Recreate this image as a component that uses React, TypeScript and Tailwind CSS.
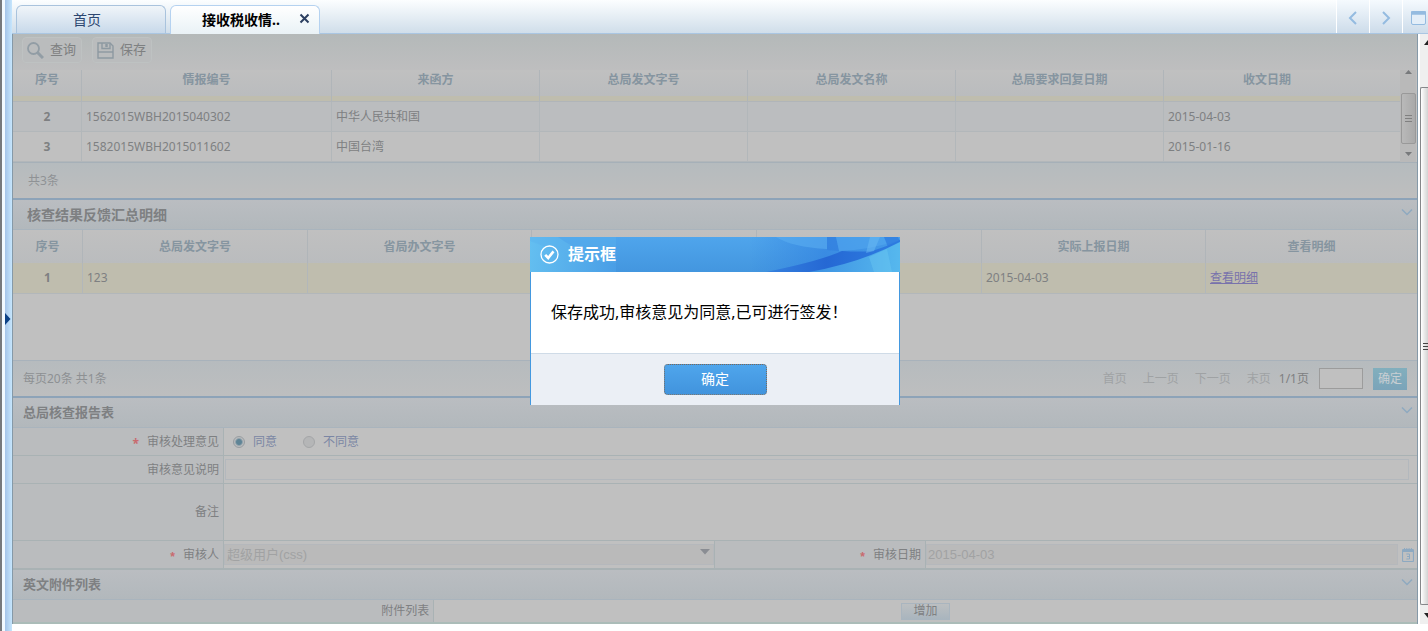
import type { ReactNode } from "react";

const TASK_COLUMNS = [
  { title: "序号", width: "w-[69px]" },
  { title: "情报编号", width: "w-[250px]" },
  { title: "来函方", width: "w-[208px]" },
  { title: "总局发文字号", width: "w-[208px]" },
  { title: "总局发文名称", width: "w-[208px]" },
  { title: "总局要求回复日期", width: "w-[208px]" },
  { title: "收文日期", width: "" },
];

const TASK_ROWS = [
  ["2", "1562015WBH2015040302", "中华人民共和国", "", "", "", "2015-04-03"],
  ["3", "1582015WBH2015011602", "中国台湾", "", "", "", "2015-01-16"],
];

const RESULT_COLUMNS = [
  { title: "序号", width: "w-[70px]" },
  { title: "总局发文字号", width: "w-[225px]" },
  { title: "省局办文字号", width: "w-[224px]" },
  { title: "", width: "w-[225px]" },
  { title: "", width: "w-[225px]" },
  { title: "实际上报日期", width: "w-[224px]" },
  { title: "查看明细", width: "" },
];

const PAGER_LINKS = ["首页", "上一页", "下一页", "末页"];

function Chevron() {
  return (
    <svg width="12" height="8" viewBox="0 0 12 8" fill="none" stroke="#8ea9c0" strokeWidth="1.5">
      <path d="M1 1.5 6 6.5 11 1.5" />
    </svg>
  );
}

function SectionHeader({ children, large = false }: { children: ReactNode; large?: boolean }) {
  return (
    <div className="flex h-[30px] items-center justify-between border-b border-[#a9b4bd] bg-linear-to-b from-[#babdc1] to-[#b2b8bc] pr-1 pl-[10px]">
      <h2 className={large ? "pl-1 text-sm font-bold" : "text-[13px] font-bold"}>{children}</h2>
      <button type="button" aria-label="收起" className="pb-1.5">
        <Chevron />
      </button>
    </div>
  );
}

function Label({ htmlFor, required, children }: { htmlFor?: string; required?: boolean; children: ReactNode }) {
  return (
    <label
      htmlFor={htmlFor}
      className="flex w-[211px] shrink-0 items-center justify-end gap-2 border-r border-[#a9b2b4] bg-[#babcbe] pr-1"
    >
      {required && <span className="pt-1 font-bold text-[#c96a6e]">*</span>}
      {children}
    </label>
  );
}

function TabBar() {
  return (
    <header className="flex h-[34px] items-end justify-between border-b border-[#aac6e2] bg-linear-to-b from-[#fcfeff] to-[#d0deea]">
      <nav className="flex gap-1 pl-1 text-sm">
        <a
          href="#home"
          className="flex h-7 w-[150px] items-center justify-center rounded-t-md border border-b-0 border-[#a9c3dd] bg-linear-to-b from-[#f0f5f9] to-[#c8d9ea] pr-2 text-[#2c4670]"
        >
          首页
        </a>
        <div className="-mb-px flex h-[29px] w-[150px] items-center justify-between rounded-t-md border border-b-0 border-[#b5d2f0] bg-linear-to-b from-white to-[#e9f2f6] pr-[9px] pl-[31px]">
          <a href="#task" className="font-bold text-black">
            接收税收情..
          </a>
          <button type="button" aria-label="关闭" className="pb-1">
            <svg width="11" height="11" viewBox="0 0 11 11" stroke="#2c3f60" strokeWidth="2">
              <path d="M1.5 1.5 9.5 9.5M9.5 1.5 1.5 9.5" />
            </svg>
          </button>
        </div>
      </nav>
      <div className="flex h-full">
        <button type="button" aria-label="向左" className="flex w-[33px] items-center justify-center border-l border-white bg-linear-to-b from-[#f5fafe] to-[#cddcea] pt-0.5">
          <svg width="10" height="14" viewBox="0 0 10 14" fill="none" stroke="#94bbe0" strokeWidth="2">
            <path d="M8 1 2 7 8 13" />
          </svg>
        </button>
        <button type="button" aria-label="向右" className="flex w-[33px] items-center justify-center border-l border-white bg-linear-to-b from-[#f5fafe] to-[#cddcea] pt-0.5">
          <svg width="10" height="14" viewBox="0 0 10 14" fill="none" stroke="#94bbe0" strokeWidth="2">
            <path d="M2 1 8 7 2 13" />
          </svg>
        </button>
        <button type="button" aria-label="最大化" className="flex w-[26px] items-center justify-end border-l border-white bg-linear-to-b from-[#f5fafe] to-[#cddcea] pt-0.5 pr-0.5">
          <svg width="15" height="14" viewBox="0 0 15 14" fill="none" stroke="#94bbe0">
            <rect x="0.5" y="0.5" width="14" height="13" rx="1.5" fill="#e3eef8" />
            <path d="M0 2H15" strokeWidth="3.5" />
          </svg>
        </button>
      </div>
    </header>
  );
}

function Toolbar() {
  return (
    <div className="flex h-9 items-center gap-[10px] bg-linear-to-b from-[#b4b9b9] to-[#bebebf] pb-1 pl-[9px] text-[13px] text-[#7e8081]">
      <button type="button" className="flex h-[26px] w-[60px] items-center gap-1.5 rounded border border-[#bec2c2] bg-[#babcbd] pl-1">
        <svg width="17" height="17" viewBox="0 0 17 17" fill="none" stroke="#929da5">
          <circle cx="6.5" cy="6.5" r="5.5" strokeWidth="1.8" />
          <path d="m10.5 10.5 5.5 5.5" strokeWidth="3" />
        </svg>
        查询
      </button>
      <button type="button" className="flex h-[26px] w-[60px] items-center gap-1.5 rounded border border-[#bec2c2] bg-[#babcbd] pl-1">
        <svg width="17" height="17" viewBox="0 0 17 17" fill="none" stroke="#8d99a1" strokeWidth="1.4">
          <path d="M1 1H13L16 4V16H1Z" />
          <path d="M5 1V6.5H13V1.5" />
          <path d="M9.5 2V5" strokeWidth="2.4" />
          <path d="M1 10H16" />
        </svg>
        保存
      </button>
    </div>
  );
}

function GridScrollbar() {
  return (
    <div className="mr-px flex w-4 flex-col items-center justify-between bg-[#b9b9b9] text-[#77797b]">
      <svg width="7" height="4" viewBox="0 0 7 4" fill="currentColor">
        <path d="M0 4 3.5 0 7 4Z" />
      </svg>
      <div className="mt-2.5 flex h-[51px] w-[15px] flex-col items-center justify-center gap-0.5 rounded-xs border border-[#999] bg-linear-to-r from-[#b9b9b9] to-[#a9a9a9]">
        <i className="h-px w-[7px] bg-[#808080]" />
        <i className="h-px w-[7px] bg-[#808080]" />
        <i className="h-px w-[7px] bg-[#808080]" />
      </div>
      <svg className="mb-1.5" width="7" height="4" viewBox="0 0 7 4" fill="currentColor">
        <path d="M0 0H7L3.5 4Z" />
      </svg>
    </div>
  );
}

function TaskGrid() {
  return (
    <section>
      <div className="flex border-b border-[#a6b0b8]">
        <table className="w-full flex-1 table-fixed border-separate border-spacing-0">
          <thead>
            <tr className="h-[26px] text-[#8695a0]">
              {TASK_COLUMNS.map((col) => (
                <th key={col.title} className={`${col.width} border-r border-[#b0b5b9] bg-linear-to-b from-[#c0c0c0] to-[#babcbe] p-0 pb-1.5 last:border-r-0 last:pr-[30px]`}>
                  {col.title}
                </th>
              ))}
            </tr>
          </thead>
          <tbody>
            {/* first row is scrolled almost out of view */}
            <tr className="h-1.5">
              {TASK_COLUMNS.map((col) => (
                <td key={col.title} className="border-r border-b border-[#b0b5b9] bg-[#bfbdae] p-0 last:border-r-0" />
              ))}
            </tr>
            {TASK_ROWS.map((row, i) => (
              <tr key={row[0]} className={i % 2 ? "h-[30px] bg-[#c0c0c0]" : "h-[30px] bg-[#bbbdbf]"}>
                {row.map((cell, j) => (
                  <td key={j} className="border-r border-b border-[#b2b7ba] px-1 py-0 first:text-center first:font-bold last:border-r-0">
                    {cell}
                  </td>
                ))}
              </tr>
            ))}
          </tbody>
        </table>
        <GridScrollbar />
      </div>
      <div className="flex h-[35px] items-center bg-linear-to-b from-[#b5bbbe] to-[#bebebe] pl-[15px] text-[#8f9295]">共3条</div>
    </section>
  );
}

function ResultGrid() {
  return (
    <section className="border-y-2 border-[#8da3b8]">
      <SectionHeader large>核查结果反馈汇总明细</SectionHeader>
      <div className="min-h-[130px]">
        <table className="w-full table-fixed border-separate border-spacing-0">
          <thead>
            <tr className="h-[33px] text-[#8695a0]">
              {RESULT_COLUMNS.map((col, i) => (
                <th key={i} className={`${col.width} border-r border-[#b0b5b9] bg-linear-to-b from-[#c0c0c0] to-[#babcbe] p-0 last:border-r-0`}>
                  {col.title}
                </th>
              ))}
            </tr>
          </thead>
          <tbody>
            <tr className="h-[31px] bg-[#bfbdae]">
              {["1", "123", "", "", "", "2015-04-03"].map((cell, i) => (
                <td key={i} className="border-r border-b border-[#b2b7ba] px-1 py-0 first:text-center first:font-bold">
                  {cell}
                </td>
              ))}
              <td className="border-b border-[#b2b7ba] px-1 py-0">
                <a href="#detail" className="text-[#7872ac] underline">
                  查看明细
                </a>
              </td>
            </tr>
          </tbody>
        </table>
      </div>
      <div className="flex h-9 items-center justify-between border-t border-[#a8b2bb] bg-linear-to-b from-[#b6bbbe] to-[#bdbebf] px-[10px]">
        <span className="text-[#8d9093]">每页20条 共1条</span>
        <div className="flex items-center">
          <nav className="flex gap-4 pr-2 text-[#9fa2a4]">
            {PAGER_LINKS.map((text) => (
              <a key={text} href="#page">
                {text}
              </a>
            ))}
          </nav>
          <span>1/1页</span>
          <input aria-label="页码" className="mx-[10px] h-[21px] w-11 border border-[#9c9c9c] bg-[#c0c0c0] px-1" />
          <button type="button" className="h-[22px] w-[34px] bg-linear-to-b from-[#82afbd] to-[#7ba4b9] text-[#c9cfd3]">
            确定
          </button>
        </div>
      </div>
    </section>
  );
}

function ReportForm() {
  return (
    <form className="border-b-2 border-[#a9b2b4]">
      <SectionHeader>总局核查报告表</SectionHeader>
      <div className="flex h-7 border-b border-[#a9b2b4]">
        <Label required>审核处理意见</Label>
        <div className="flex items-center gap-[26px] pl-[9px] text-[#7b86a4]">
          <label className="flex items-center gap-2">
            <input
              type="radio"
              name="opinion"
              defaultChecked
              className="size-3 appearance-none rounded-full border border-[#999ea2] bg-[#b5b8ba] checked:bg-radial checked:from-[#5f8496] checked:from-35% checked:to-[#b8babc] checked:to-60%"
            />
            同意
          </label>
          <label className="flex items-center gap-2">
            <input type="radio" name="opinion" className="size-3 appearance-none rounded-full border border-[#a4a6a8] bg-[#b5b6b7]" />
            不同意
          </label>
        </div>
      </div>
      <div className="flex h-7 border-b border-[#a9b2b4]">
        <Label htmlFor="explain">审核意见说明</Label>
        <div className="flex flex-1 items-center pr-2 pl-px">
          <input id="explain" className="h-[21px] w-full border border-[#b3b8bd] bg-[#c0c0c0] px-1" />
        </div>
      </div>
      <div className="flex h-[57px] border-b border-[#a9b2b4]">
        <Label htmlFor="remark">备注</Label>
        <textarea id="remark" className="flex-1 resize-none bg-[#c0c0c0] p-1" />
      </div>
      <div className="grid h-[27px] grid-cols-2 font-[Liberation_Sans,Noto_Sans_CJK_SC,sans-serif]">
        <div className="flex border-r border-[#a9b2b4]">
          <Label htmlFor="reviewer" required>
            审核人
          </Label>
          <div className="relative flex flex-1 items-center">
            <select id="reviewer" className="h-[21px] w-full appearance-none border border-[#b5b8bc] bg-[#bababa] pl-0.5 text-[13px] text-[#a1a2a3]">
              <option>超级用户(css)</option>
            </select>
            <svg className="pointer-events-none absolute top-2 right-1" width="10" height="6" viewBox="0 0 10 6" fill="#8a8d93">
              <path d="M0 0H10L5 5.5Z" />
            </svg>
          </div>
        </div>
        <div className="flex">
          <Label htmlFor="date" required>
            审核日期
          </Label>
          <div className="flex flex-1 items-center gap-1 pr-[3px]">
            <input id="date" defaultValue="2015-04-03" className="h-[21px] min-w-0 flex-1 border border-[#b5b8bc] bg-[#bababa] px-px text-[13px] text-[#a1a2a3]" />
            <button type="button" aria-label="选择日期">
              <svg width="12" height="14" viewBox="0 0 12 14" fill="none" stroke="#8da9c1">
                <rect x="0.5" y="1.5" width="11" height="12" rx="1" strokeWidth="1.2" />
                <path d="M0 3H12" strokeWidth="2" />
                <path d="M2.5 0V2M4.8 0V2M7.1 0V2M9.4 0V2" />
                <path d="M4.3 6H7.5V11H4.3M5 8.5H7.5" />
              </svg>
            </button>
          </div>
        </div>
      </div>
    </form>
  );
}

function Attachments() {
  return (
    <section className="border-b-2 border-[#abbcb8]">
      <SectionHeader>英文附件列表</SectionHeader>
      <div className="flex h-[22px]">
        <div className="flex w-[30%] items-center justify-end border-r border-[#a9b2b4] bg-[#babcbe] pr-1">附件列表</div>
        <div className="flex flex-1 items-center justify-center">
          <button type="button" className="h-[17px] w-[49px] border border-[#a9b5bf] bg-linear-to-b from-[#bcbfc1] to-[#a9b5be] text-xs leading-none">
            增加
          </button>
        </div>
      </div>
    </section>
  );
}

function PageScrollbar() {
  return (
    <div className="flex w-[10px] shrink-0 flex-col overflow-hidden border-l-2 border-white bg-[#efefef]">
      <svg className="mt-1.5 ml-1" width="8" height="5" viewBox="0 0 8 5" fill="#222">
        <path d="M0 5 4 0 8 5Z" />
      </svg>
      <div className="mt-[42px] flex flex-1 flex-col items-end justify-center gap-0.5 rounded-l-xs border border-r-0 border-[#85878a] bg-linear-to-r from-white to-[#d2d2d2]">
        <i className="h-px w-[5px] bg-[#444]" />
        <i className="h-px w-[5px] bg-[#444]" />
        <i className="h-px w-[5px] bg-[#444]" />
      </div>
      <svg className="mt-2 mb-1.5 ml-1 shrink-0" width="8" height="5" viewBox="0 0 8 5" fill="#222">
        <path d="M0 0H8L4 5Z" />
      </svg>
    </div>
  );
}

function MessageDialog() {
  return (
    <div className="absolute inset-0 flex items-center justify-center pt-2.5 pl-0.5">
      <div role="dialog" aria-labelledby="dialog-title" className="w-[370px] text-black">
        <div className="relative flex h-[35px] items-center gap-[9px] overflow-hidden bg-linear-to-b from-[#4fa5ec] to-[#4396df] pl-[10px]">
          <svg className="absolute inset-0" width="370" height="35" viewBox="0 0 370 35">
            <defs>
              <linearGradient id="glow" x1="0" y1="0" x2="1" y2="0">
                <stop offset="0" stopColor="#68c4f2" />
                <stop offset="1" stopColor="#4a9fe7" />
              </linearGradient>
              <linearGradient id="deep" x1="0" y1="0" x2="1" y2="0">
                <stop offset="0" stopColor="#2f7fe0" stopOpacity="0" />
                <stop offset="0.5" stopColor="#2f7fe0" stopOpacity="0.6" />
                <stop offset="1" stopColor="#3f96e8" stopOpacity="0.6" />
              </linearGradient>
              <linearGradient id="wave" x1="0" y1="0" x2="1" y2="0">
                <stop offset="0" stopColor="#3580de" />
                <stop offset="0.45" stopColor="#2568d4" />
                <stop offset="1" stopColor="#2f7ee2" />
              </linearGradient>
              <linearGradient id="corner" x1="0" y1="0" x2="1" y2="0">
                <stop offset="0" stopColor="#3c90e2" />
                <stop offset="1" stopColor="#56b8ee" />
              </linearGradient>
            </defs>
            <path d="M0 0H28Q46 14 86 26V35H0Z" fill="url(#glow)" opacity="0.85" />
            <path d="M0 0H86V26Q46 22 0 4Z" fill="#5ab2ee" opacity="0.45" />
            <path d="M220 0H370V35H220Z" fill="url(#deep)" />
            <path d="M246 0H297V12Q262 10 246 0Z" fill="#5aaef0" opacity="0.6" />
            <path d="M297 0H306L309 14 297 13Z" fill="#2d7ade" opacity="0.5" />
            <path d="M306 0H370V3Q340 13 309 14Z" fill="#52a6ee" opacity="0.6" />
            <path d="M236 35Q290 24 312 14Q330 15 342 14Q358 9 370 3V10L340 22 290 35Z" fill="url(#wave)" />
            <path d="M340 0H350L344 14 336 16Z" fill="#6cbcf4" opacity="0.5" />
            <path d="M354 0H368L370 4 358 10Z" fill="#2c78de" opacity="0.7" />
            <path d="M279 35Q330 26 370 5V35Z" fill="url(#corner)" />
            <path d="M339 20 357 12 362 35H344Z" fill="#73cdf4" opacity="0.35" />
          </svg>
          <svg className="relative" width="19" height="19" viewBox="0 0 19 19" fill="none" stroke="#fff">
            <circle cx="9.5" cy="9.5" r="8.5" strokeWidth="1.3" />
            <path d="m5.2 9.8 3 3.2 5.3-6.6" strokeWidth="2.6" />
          </svg>
          <h1 id="dialog-title" className="relative text-base font-bold text-white">
            提示框
          </h1>
        </div>
        <div className="border-x border-[#4398df]">
          <p className="flex h-[81px] items-center bg-white pl-5 text-base">保存成功,审核意见为同意,已可进行签发！</p>
          <div className="flex h-[52px] items-center justify-center border-t border-[#cfdbe7] bg-[#ebeff5]">
            <button
              type="button"
              className="h-[31px] w-[103px] rounded border border-dotted border-[#7d6a58] bg-linear-to-b from-[#4fa5ec] to-[#4194dd] text-sm text-white"
            >
              确定
            </button>
          </div>
        </div>
      </div>
    </div>
  );
}

export default function App() {
  return (
    <div className="relative flex min-h-screen overflow-hidden bg-white font-[Noto_Sans,Noto_Sans_CJK_SC,sans-serif] text-xs text-[#7e8082]">
      {/* collapsed side panel */}
      <aside className="flex w-3 shrink-0 border-l-2 border-[#77797c] bg-[#f2f9ff]">
        <button type="button" aria-label="展开" className="ml-[3px] flex w-[7px] items-center bg-linear-to-r from-[#a5c4e8] to-[#c6e6fd] pt-1.5">
          <svg width="6" height="12" viewBox="0 0 6 12" fill="#0c4186">
            <path d="M0 0 5.5 6 0 12Z" />
          </svg>
        </button>
      </aside>
      <div className="flex min-w-0 flex-1 flex-col">
        <TabBar />
        <div className="flex">
          <main className="min-w-0 flex-1 border-x border-[#8599a8] bg-[#c0c0c0]">
            <Toolbar />
            <TaskGrid />
            <ResultGrid />
            <ReportForm />
            <Attachments />
          </main>
          <PageScrollbar />
        </div>
      </div>
      <MessageDialog />
    </div>
  );
}
